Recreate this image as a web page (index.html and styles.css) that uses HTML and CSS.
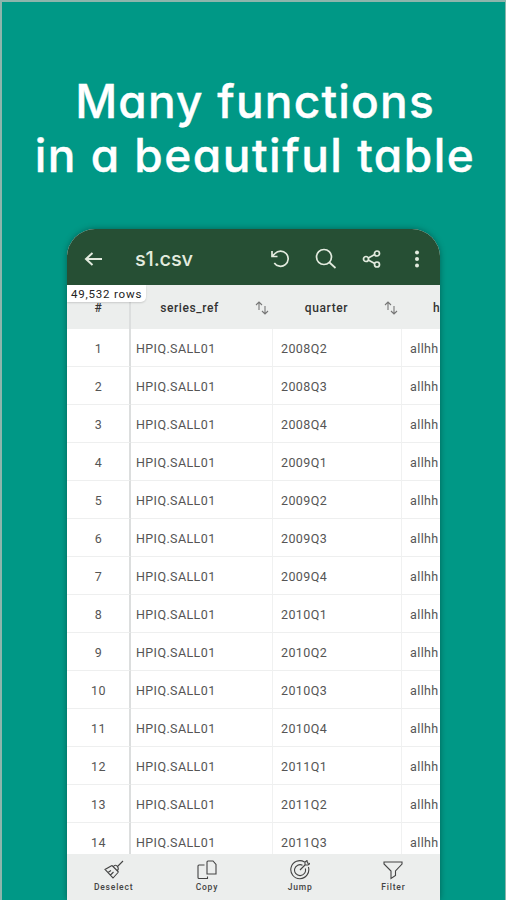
FILE: index.html
```
<!DOCTYPE html>
<html lang="en">
<head>
    <meta charset="UTF-8">
    <meta name="viewport" content="width=device-width, initial-scale=1.0">
    <title>s1.csv</title>
    <link rel="stylesheet" href="styles.css">
</head>
<body>
    <h1><span class="line-one">Many functions</span><br><span class="line-two">in a beautiful table</span></h1>
    <div class="phone">
        <header>
            <svg class="back" width="20" height="20" viewBox="0 0 20 20"><path d="M19 10H3M9.500 4L3 10l6.500 6"/></svg>
            <h2>s1.csv</h2>
            <svg width="20" height="20" viewBox="0 0 20 20"><path d="M2 2v5.500h5.500M2.300 7.200L5 4.500A7.600 7.600 0 1 1 4.300 14"/></svg>
            <svg width="22" height="22" viewBox="0 0 22 22"><circle cx="9" cy="9" r="7.500"/><path d="M14.500 14.500L20.500 20"/></svg>
            <svg width="20" height="20" viewBox="0 0 20 20"><circle cx="4" cy="10" r="2.500"/><circle cx="15" cy="4.500" r="2.500"/><circle cx="15" cy="15.500" r="2.500"/><path d="M6.300 9L12.700 5.600M6.300 11l6.400 3.400"/></svg>
            <svg class="more" width="6" height="20" viewBox="0 0 6 20"><circle cx="3" cy="3.500" r="2"/><circle cx="3" cy="10" r="2"/><circle cx="3" cy="16.500" r="2"/></svg>
        </header>
        <div class="sheet">
            <div class="count">49,532 rows</div>
            <table>
                <thead>
                    <tr>
                        <th class="num">#</th>
                        <th class="ref"><div class="head"><span>series_ref</span><svg class="sort" width="14" height="14" viewBox="0 0 14 14"><path d="M1 4l3-3 3 3M4 1v8M7 10l3 3 3-3M10 13V5"/></svg></div></th>
                        <th class="quarter"><div class="head"><span>quarter</span><svg class="sort" width="14" height="14" viewBox="0 0 14 14"><path d="M1 4l3-3 3 3M4 1v8M7 10l3 3 3-3M10 13V5"/></svg></div></th>
                        <th class="type">h</th>
                    </tr>
                </thead>
                <tbody>
                    <tr><td>1</td><td>HPIQ.SALL01</td><td>2008Q2</td><td>allhh</td></tr>
                    <tr><td>2</td><td>HPIQ.SALL01</td><td>2008Q3</td><td>allhh</td></tr>
                    <tr><td>3</td><td>HPIQ.SALL01</td><td>2008Q4</td><td>allhh</td></tr>
                    <tr><td>4</td><td>HPIQ.SALL01</td><td>2009Q1</td><td>allhh</td></tr>
                    <tr><td>5</td><td>HPIQ.SALL01</td><td>2009Q2</td><td>allhh</td></tr>
                    <tr><td>6</td><td>HPIQ.SALL01</td><td>2009Q3</td><td>allhh</td></tr>
                    <tr><td>7</td><td>HPIQ.SALL01</td><td>2009Q4</td><td>allhh</td></tr>
                    <tr><td>8</td><td>HPIQ.SALL01</td><td>2010Q1</td><td>allhh</td></tr>
                    <tr><td>9</td><td>HPIQ.SALL01</td><td>2010Q2</td><td>allhh</td></tr>
                    <tr><td>10</td><td>HPIQ.SALL01</td><td>2010Q3</td><td>allhh</td></tr>
                    <tr><td>11</td><td>HPIQ.SALL01</td><td>2010Q4</td><td>allhh</td></tr>
                    <tr><td>12</td><td>HPIQ.SALL01</td><td>2011Q1</td><td>allhh</td></tr>
                    <tr><td>13</td><td>HPIQ.SALL01</td><td>2011Q2</td><td>allhh</td></tr>
                    <tr><td>14</td><td>HPIQ.SALL01</td><td>2011Q3</td><td>allhh</td></tr>
                </tbody>
            </table>
        </div>
        <nav>
            <a>
                <svg width="20" height="20" viewBox="0 0 20 20"><path d="M19 1l-6 6M8 5.500l6.500 6.500M8 5.500L1 9.500l8 8.500 5.500-6M9.500 6.500c1-2 3-1.500 4 0s1.500 2.500 0 4M4 12.500l3-2M6.500 15l3-3"/></svg>
                <span>Deselect</span>
            </a>
            <a>
                <svg width="20" height="20" viewBox="0 0 20 20"><path d="M11 1h5l3 3.500V14h-9V2a1 1 0 0 1 1-1zM7.500 5H2a1 1 0 0 0-1 1v11.500a1 1 0 0 0 1 1h8.500V16.500"/></svg>
                <span>Copy</span>
            </a>
            <a>
                <svg width="20" height="20" viewBox="0 0 20 20"><path d="M14.500 2A9 9 0 1 0 18.400 7M12.500 5.200A5.500 5.500 0 1 0 15.300 8.500M10 10l5-5M15 5V2l2-1.500.500 2.500 2.500.500-2 1.500z"/></svg>
                <span>Jump</span>
            </a>
            <a>
                <svg width="20" height="20" viewBox="0 0 20 20"><path d="M1 2h18v2l-6.500 7v4.500L8 18.500V11L1 4z"/></svg>
                <span>Filter</span>
            </a>
        </nav>
    </div>
</body>
</html>
```
FILE: styles.css
```
* {
    box-sizing: border-box;
}
body {
    margin: 0;
    height: 900px;
    overflow: hidden;
    background-color: #009886;
    border: 2px solid #8db5ac;
    border-right-width: 1px;
    border-bottom: none;
    font-family: Roboto, sans-serif;
}
h1 {
    margin: 72px 0 0;
    height: 155px;
    padding-left: 3px;
    text-align: center;
    color: white;
    font-family: Inter, sans-serif;
    font-feature-settings: "cv11";
    font-size: 46px;
    font-weight: 500;
    line-height: 54px;
    white-space: nowrap;
    -webkit-text-stroke: 0.4px white;
}
.line-one {
    letter-spacing: 1.2px;
}
.line-two {
    letter-spacing: 1.5px;
}
.phone {
    display: flex;
    flex-direction: column;
    width: 373px;
    height: 671px;
    margin-left: 65px;
    background-color: white;
    border-radius: 28px 28px 0 0;
    overflow: hidden;
    box-shadow: 0 0 6px rgba(0, 0, 0, 0.35);
}
header {
    display: flex;
    align-items: center;
    flex: 0 0 56px;
    padding: 4px 20px 0 16px;
    background-color: #264f34;
    color: #e3ebdf;
}
h2 {
    flex: 1;
    margin: 0 0 0 32px;
    font-family: Inter, sans-serif;
    font-size: 20px;
    font-weight: 500;
    letter-spacing: -0.2px;
}
svg {
    fill: none;
    stroke: currentColor;
    stroke-width: 1.5;
}
header svg {
    margin-left: 25px;
    stroke-width: 1.7;
}
header .back {
    margin-left: 0;
    stroke-width: 2;
}
header .more {
    margin-left: 32px;
    fill: currentColor;
    stroke: none;
}
.sheet {
    position: relative;
    flex: 1;
    min-height: 0;
    overflow: hidden;
}
.count {
    position: absolute;
    top: 0;
    left: 0;
    width: 79px;
    height: 17px;
    padding-left: 4px;
    background-color: white;
    border-radius: 0 0 5px 0;
    box-shadow: 0 1px 2px rgba(0, 0, 0, 0.15);
    color: #222;
    font-size: 11.5px;
    line-height: 19px;
    letter-spacing: 0.8px;
    white-space: nowrap;
}
table {
    width: 435px;
    table-layout: fixed;
    border-collapse: separate;
    border-spacing: 0;
}
th {
    height: 44px;
    padding: 1px 4px 0 0;
    background-color: #eceeed;
    color: #333;
    font-size: 12px;
    font-weight: 500;
    letter-spacing: 0.6px;
    text-align: left;
}
.num {
    width: 64px;
    text-align: center;
}
.ref {
    width: 142px;
}
.quarter {
    width: 129px;
}
th.type {
    width: 100px;
    padding-left: 31px;
}
.head {
    display: flex;
    align-items: center;
}
.head span {
    flex: 1;
    text-align: center;
}
.ref .head span {
    padding-right: 7px;
}
.quarter .head span {
    padding-right: 4px;
}
.sort {
    stroke: #777;
    stroke-width: 1.1;
}
td {
    height: 38px;
    padding: 1px 7px 0;
    border-right: 1px solid #f0f1f1;
    border-bottom: 1px solid #eeefef;
    color: #555;
    font-size: 12.5px;
    letter-spacing: 0.4px;
}
td:nth-child(2) {
    padding-left: 5px;
}
td:nth-child(3), td:nth-child(4) {
    padding-left: 8px;
}
td:first-child {
    text-align: center;
}
th:first-child, td:first-child {
    padding-left: 1px;
    padding-right: 0;
    border-right: 2px solid #dcdede;
}
nav {
    display: flex;
    flex: 0 0 46px;
    background-color: #eceeed;
    color: #444;
}
nav a {
    display: flex;
    flex: 1;
    flex-direction: column;
    align-items: center;
    padding-top: 6px;
    font-size: 8.5px;
    font-weight: 500;
    letter-spacing: 0.8px;
    line-height: 14px;
}
nav svg {
    stroke-width: 1.1;
}
```
